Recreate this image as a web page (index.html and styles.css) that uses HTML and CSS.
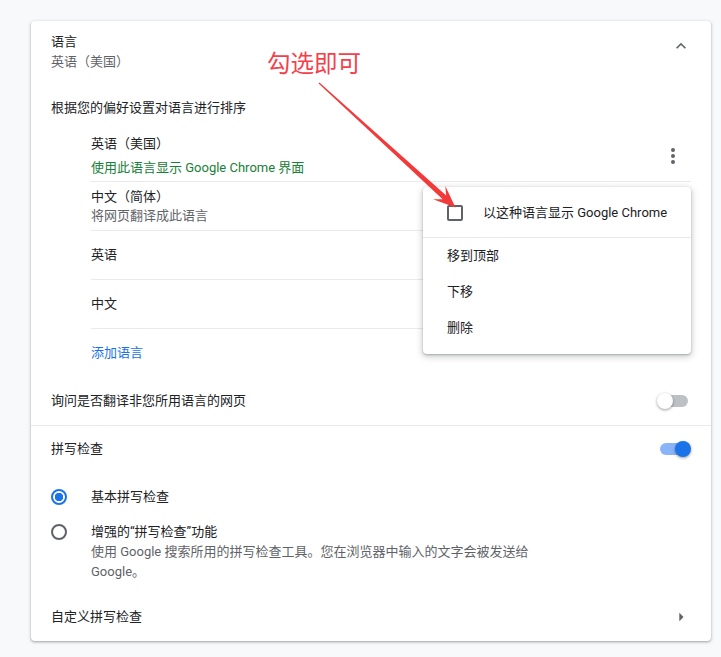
FILE: index.html
```html
<!DOCTYPE html>
<html lang="zh-CN">
<head>
<meta charset="utf-8">
<title>语言设置</title>
<link rel="stylesheet" href="styles.css">
</head>
<body>
<div class="page">
  <div class="card">
    <div class="head">
      <div>
        <div class="title">语言</div>
        <div class="sub">英语（美国）</div>
      </div>
      <svg class="chev" width="20" height="20" viewBox="0 0 24 24"><path d="M7.41 15.41L12 10.83l4.59 4.58L18 14l-6-6-6 6z" fill="#5f6368"/></svg>
    </div>
    <div class="label">根据您的偏好设置对语言进行排序</div>
    <div class="langs">
      <div class="lang first">
        <div class="lang-text">
          <div class="lh24">英语（美国）</div>
          <div class="lh24 green">使用此语言显示 Google Chrome 界面</div>
        </div>
        <svg class="dots" width="4" height="16" viewBox="0 0 4 16"><circle cx="2" cy="2" r="2" fill="#5f6368"/><circle cx="2" cy="8" r="2" fill="#5f6368"/><circle cx="2" cy="14" r="2" fill="#5f6368"/></svg>
      </div>
      <div class="lang">
        <div class="lang-text">
          <div class="lh19">中文（简体）</div>
          <div class="lh19 grey">将网页翻译成此语言</div>
        </div>
      </div>
      <div class="lang"><div class="lang-text">英语</div></div>
      <div class="lang"><div class="lang-text">中文</div></div>
    </div>
    <div class="add">添加语言</div>
    <div class="row bordered">
      <span>询问是否翻译非您所用语言的网页</span>
      <span class="toggle"><span class="track"></span><span class="knob"></span></span>
    </div>
    <div class="row spell">
      <span>拼写检查</span>
      <span class="toggle on"><span class="track"></span><span class="knob"></span></span>
    </div>
    <div class="radio-row basic">
      <span class="radio-col"><span class="radio checked"></span></span>
      <span>基本拼写检查</span>
    </div>
    <div class="radio-row enh">
      <span class="radio-col"><span class="radio"></span></span>
      <div>
        <div class="lh20">增强的“拼写检查”功能</div>
        <div class="lh20 grey">使用 Google 搜索所用的拼写检查工具。您在浏览器中输入的文字会被发送给<br>Google。</div>
      </div>
    </div>
    <div class="row last">
      <span>自定义拼写检查</span>
      <svg class="tri" width="20" height="20" viewBox="0 0 24 24"><path d="M10 7l5 5-5 5z" fill="#5f6368"/></svg>
    </div>
  </div>

  <div class="menu">
    <div class="menu-check">
      <span class="checkbox"></span>
      <span class="nowrap">以这种语言显示 Google Chrome</span>
    </div>
    <div class="menu-item">移到顶部</div>
    <div class="menu-item">下移</div>
    <div class="menu-item">删除</div>
  </div>

  <div class="note">勾选即可</div>
  <svg class="arrow" width="721" height="657" viewBox="0 0 721 657">
    <polygon points="318.6,83.4 442.6,199.3 433.1,199.3 455.5,207.5 445.3,186.1 446.2,195.5 319.4,82.6" fill="#f23a3a"/>
  </svg>
</div>
</body>
</html>
```

FILE: styles.css
```css
html, body {
  margin: 0;
  padding: 0;
  background: #f8f9fa;
}
body {
  font-family: Roboto, "Noto Sans CJK SC", sans-serif;
  font-size: 13px;
  line-height: 20px;
  color: #202124;
}
.page {
  position: relative;
  width: 721px;
  height: 657px;
  padding: 21px 0 0 31px;
  box-sizing: border-box;
  overflow: hidden;
}
.card {
  width: 680px;
  height: 620px;
  background: #fff;
  border-radius: 4px;
  box-shadow: 0 1px 2px rgba(60,64,67,0.3), 0 1px 3px 1px rgba(60,64,67,0.15);
  box-sizing: border-box;
}
.head {
  display: flex;
  align-items: center;
  justify-content: space-between;
  padding: 11px 20px 12px 20px;
}
.sub, .grey {
  color: #5f6368;
}
.green {
  color: #188038;
}
.chev {
  display: block;
  margin-top: -12px;
}
.label {
  padding: 14px 20px 8px 20px;
}
.langs {
  margin: 0 20px 0 60px;
}
.lang {
  display: flex;
  align-items: center;
  justify-content: space-between;
  min-height: 48px;
  border-bottom: 1px solid #e8eaed;
}
.lang.first {
  min-height: 0;
  padding: 6px 0 1px 0;
}
.lh24 { line-height: 24px; }
.lh19 { line-height: 19px; }
.lh20 { line-height: 20px; }
.nowrap { white-space: nowrap; }
.dots {
  display: block;
  margin-right: 16px;
}
.add {
  height: 48px;
  display: flex;
  align-items: center;
  padding-left: 60px;
  color: #1a73e8;
}
.row {
  display: flex;
  align-items: center;
  justify-content: space-between;
  height: 48px;
  padding: 0 20px;
}
.row.bordered {
  border-bottom: 1px solid #e8eaed;
}
.row.spell {
  height: 46px;
}
.toggle {
  position: relative;
  display: block;
  width: 34px;
  height: 16px;
}
.track {
  position: absolute;
  left: 3px;
  top: 2px;
  width: 28px;
  height: 12px;
  border-radius: 6px;
  background: #bdc1c6;
}
.knob {
  position: absolute;
  left: 0;
  top: 0;
  width: 16px;
  height: 16px;
  border-radius: 50%;
  background: #fff;
  box-shadow: 0 1px 3px rgba(0,0,0,0.4);
}
.toggle.on .track {
  background: #8ab4f8;
}
.toggle.on .knob {
  left: 18px;
  background: #1a73e8;
}
.radio-row {
  display: flex;
  padding: 0 20px;
}
.radio-row.basic {
  height: 50px;
  align-items: center;
}
.radio-row.enh {
  padding-bottom: 11px;
}
.radio-col {
  display: flex;
  align-items: center;
  width: 40px;
  height: 20px;
  flex-shrink: 0;
}
.radio {
  display: block;
  width: 16px;
  height: 16px;
  box-sizing: border-box;
  border: 2px solid #5f6368;
  border-radius: 50%;
}
.radio.checked {
  border-color: #1a73e8;
  background: radial-gradient(circle, #1a73e8 0 4px, transparent 4.5px);
}
.row.last .tri {
  display: block;
}
.menu {
  position: absolute;
  left: 423px;
  top: 187px;
  width: 268px;
  padding: 8px 0;
  background: #fff;
  border-radius: 4px;
  box-shadow: 0 2px 6px 1px rgba(60,64,67,0.25), 0 1px 2px rgba(60,64,67,0.3);
}
.menu-check {
  display: flex;
  align-items: center;
  height: 36px;
  padding: 0 12px 6px 24px;
  border-bottom: 1px solid #e8eaed;
}
.checkbox {
  display: block;
  flex-shrink: 0;
  width: 16px;
  height: 16px;
  box-sizing: border-box;
  border: 2px solid #5f6368;
  border-radius: 2px;
  margin-right: 20px;
}
.menu-item {
  height: 36px;
  display: flex;
  align-items: center;
  padding-left: 24px;
}
.note {
  position: absolute;
  left: 267px;
  top: 50px;
  font-family: "Noto Sans CJK SC", sans-serif;
  font-size: 23.5px;
  line-height: 24px;
  color: #f4404a;
}
.arrow {
  position: absolute;
  left: 0;
  top: 0;
  pointer-events: none;
}
```
